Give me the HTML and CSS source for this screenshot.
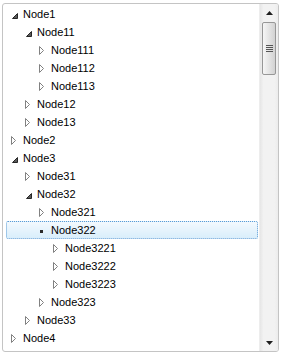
FILE: index.html
```html
<!DOCTYPE html>
<html>
<head>
<meta charset="utf-8">
<link rel="stylesheet" href="styles.css">
</head>
<body>
<div class="tree">
  <div class="content">
    <div class="row l0"><svg class="exp" viewBox="0 0 16 16"><polygon class="open" points="5.5,12.5 10.5,12.5 10.5,7.5"/></svg><span>Node1</span></div>
    <div class="row l1"><svg class="exp" viewBox="0 0 16 16"><polygon class="open" points="5.5,12.5 10.5,12.5 10.5,7.5"/></svg><span>Node11</span></div>
    <div class="row l2"><svg class="exp" viewBox="0 0 16 16"><polygon class="closed" points="4.5,4.5 8.5,8.5 4.5,12.5"/></svg><span>Node111</span></div>
    <div class="row l2"><svg class="exp" viewBox="0 0 16 16"><polygon class="closed" points="4.5,4.5 8.5,8.5 4.5,12.5"/></svg><span>Node112</span></div>
    <div class="row l2"><svg class="exp" viewBox="0 0 16 16"><polygon class="closed" points="4.5,4.5 8.5,8.5 4.5,12.5"/></svg><span>Node113</span></div>
    <div class="row l1"><svg class="exp" viewBox="0 0 16 16"><polygon class="closed" points="4.5,4.5 8.5,8.5 4.5,12.5"/></svg><span>Node12</span></div>
    <div class="row l1"><svg class="exp" viewBox="0 0 16 16"><polygon class="closed" points="4.5,4.5 8.5,8.5 4.5,12.5"/></svg><span>Node13</span></div>
    <div class="row l0"><svg class="exp" viewBox="0 0 16 16"><polygon class="closed" points="4.5,4.5 8.5,8.5 4.5,12.5"/></svg><span>Node2</span></div>
    <div class="row l0"><svg class="exp" viewBox="0 0 16 16"><polygon class="open" points="5.5,12.5 10.5,12.5 10.5,7.5"/></svg><span>Node3</span></div>
    <div class="row l1"><svg class="exp" viewBox="0 0 16 16"><polygon class="closed" points="4.5,4.5 8.5,8.5 4.5,12.5"/></svg><span>Node31</span></div>
    <div class="row l1"><svg class="exp" viewBox="0 0 16 16"><polygon class="open" points="5.5,12.5 10.5,12.5 10.5,7.5"/></svg><span>Node32</span></div>
    <div class="row l2"><svg class="exp" viewBox="0 0 16 16"><polygon class="closed" points="4.5,4.5 8.5,8.5 4.5,12.5"/></svg><span>Node321</span></div>
    <div class="row l2 selected"><svg class="exp" viewBox="0 0 16 16"><rect class="dot" x="5" y="8" width="3" height="3"/></svg><span>Node322</span></div>
    <div class="row l3"><svg class="exp" viewBox="0 0 16 16"><polygon class="closed" points="4.5,4.5 8.5,8.5 4.5,12.5"/></svg><span>Node3221</span></div>
    <div class="row l3"><svg class="exp" viewBox="0 0 16 16"><polygon class="closed" points="4.5,4.5 8.5,8.5 4.5,12.5"/></svg><span>Node3222</span></div>
    <div class="row l3"><svg class="exp" viewBox="0 0 16 16"><polygon class="closed" points="4.5,4.5 8.5,8.5 4.5,12.5"/></svg><span>Node3223</span></div>
    <div class="row l2"><svg class="exp" viewBox="0 0 16 16"><polygon class="closed" points="4.5,4.5 8.5,8.5 4.5,12.5"/></svg><span>Node323</span></div>
    <div class="row l1"><svg class="exp" viewBox="0 0 16 16"><polygon class="closed" points="4.5,4.5 8.5,8.5 4.5,12.5"/></svg><span>Node33</span></div>
    <div class="row l0"><svg class="exp" viewBox="0 0 16 16"><polygon class="closed" points="4.5,4.5 8.5,8.5 4.5,12.5"/></svg><span>Node4</span></div>
  </div>
  <div class="scrollbar">
    <div class="btn"><svg width="7" height="4" viewBox="0 0 7 4"><polygon points="0,4 7,4 3.5,0" fill="#1e1e1e"/></svg></div>
    <div class="thumb"><div class="grip"><i></i><i></i><i></i><i></i></div></div>
    <div class="track"></div>
    <div class="btn"><svg width="7" height="4" viewBox="0 0 7 4"><polygon points="0,0 7,0 3.5,4" fill="#1e1e1e"/></svg></div>
  </div>
</div>
</body>
</html>
```

FILE: styles.css
```css
html, body {
  margin: 0;
  padding: 0;
  background: #ffffff;
}
body {
  font-family: "Liberation Sans", Arial, sans-serif;
  font-size: 11px;
  color: #000;
}
.tree {
  margin: 3px 0 0 2px;
  width: 275px;
  height: 347px;
  border: 1px solid #c4c4c4;
  border-radius: 3px;
  display: flex;
  overflow: hidden;
}
.content {
  flex: 1;
  padding: 1px 1px 0 3px;
}
.row {
  height: 16px;
  border: 1px solid transparent;
  border-radius: 2px;
  display: flex;
  align-items: center;
  white-space: nowrap;
}
.row span {
  line-height: 16px;
}
.l1 { padding-left: 14px; }
.l2 { padding-left: 28px; }
.l3 { padding-left: 42px; }
.exp {
  width: 16px;
  height: 16px;
  flex: none;
}
.closed {
  fill: #fff;
  stroke: #818181;
  stroke-width: 1;
}
.open {
  fill: #595959;
  stroke: #262626;
  stroke-width: 1;
}
.dot {
  fill: #2a2a2a;
}
.selected {
  border: 1px dotted #5a9bd5;
  background: linear-gradient(#f3f9fe, #d9eefb);
}
.scrollbar {
  width: 18px;
  display: flex;
  flex-direction: column;
  background: linear-gradient(to right, #e6e6e6, #f2f2f2 20%, #f2f2f2 80%, #ececec);
  border-left: 1px solid #ededed;
}
.btn {
  height: 17px;
  display: flex;
  align-items: center;
  justify-content: center;
  flex: none;
}
.thumb {
  height: 51px;
  margin: 1px 2px 0 2px;
  border: 1px solid #979797;
  border-radius: 2px;
  background: linear-gradient(to right, #f6f6f6, #e4e4e4 50%, #d2d2d2);
  display: flex;
  align-items: center;
  justify-content: center;
  flex: none;
}
.grip {
  display: flex;
  flex-direction: column;
  gap: 1px;
}
.grip i {
  display: block;
  width: 7px;
  height: 1px;
  background: #555;
}
.track {
  flex: 1;
}
```
